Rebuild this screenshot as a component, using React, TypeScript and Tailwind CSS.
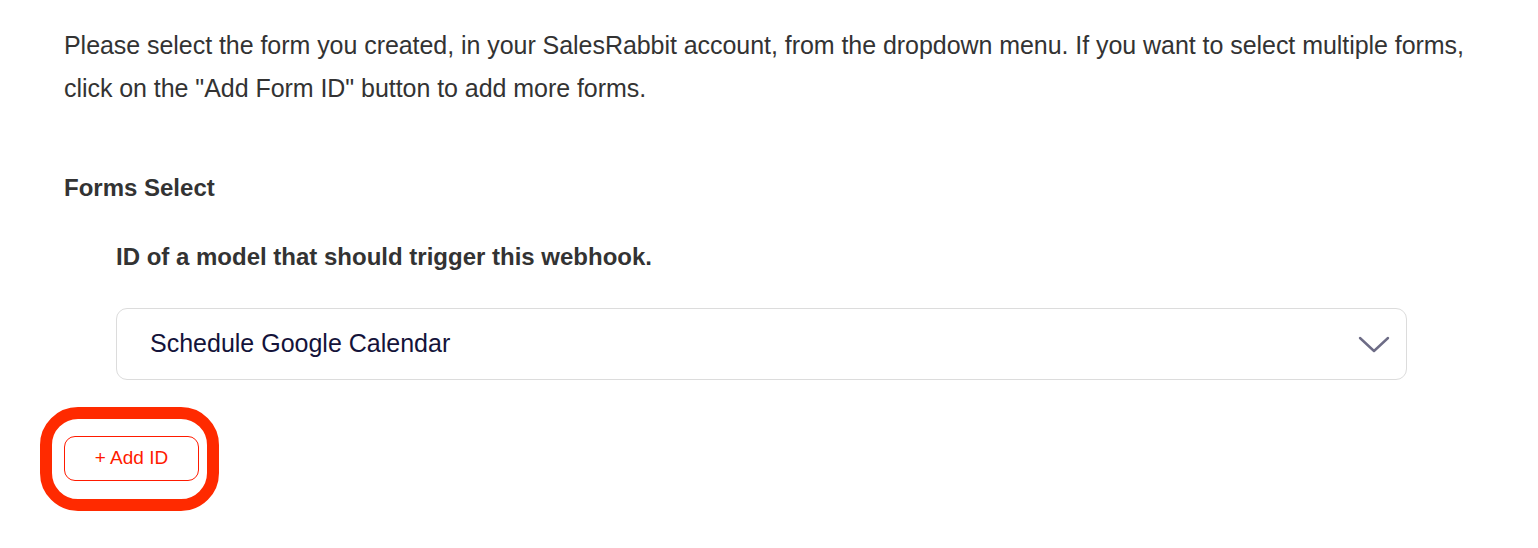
export default function App() {
  return (
    <div className="min-h-screen bg-white px-16 pt-[24px] font-['Liberation_Sans',Arial,sans-serif] text-[#333333]">
      <p className="text-[25px] leading-[43px] tracking-[-0.05px]">
        Please select the form you created, in your SalesRabbit account, from the dropdown menu. If you want to select multiple forms,
        click on the "Add Form ID" button to add more forms.
      </p>

      <div className="mt-[63px]">
        <h3 className="text-[24px] font-bold leading-[30px]">Forms Select</h3>

        <div className="ml-[52px] mt-[39px]">
          <div className="text-[24px] font-bold leading-[30px]">ID of a model that should trigger this webhook.</div>

          <div className="mt-[36px] flex h-[72px] w-[1291px] items-center justify-between rounded-[11px] border border-[#dcdcdc] pl-[33px] pr-[16px]">
            <span className="text-[25px] text-[#14133a]">Schedule Google Calendar</span>
            <svg width="32" height="20" viewBox="0 0 32 20" fill="none" stroke="#6d6c86" strokeWidth="2.4" strokeLinecap="round" strokeLinejoin="round">
              <path d="M2 4 L16 17 L30 4" />
            </svg>
          </div>
        </div>

        <div className="relative mt-[56px] w-fit">
          <button className="flex h-[45px] w-[135px] items-center justify-center rounded-[11px] border border-[#ff1a00] text-[19px] text-[#ff1a00]">
            + Add ID
          </button>
          <div className="pointer-events-none absolute -left-[24px] -right-[20px] -top-[29px] -bottom-[30px] rounded-[38px] border-[12px] border-[#ff2a00]" />
        </div>
      </div>
    </div>
  )
}
